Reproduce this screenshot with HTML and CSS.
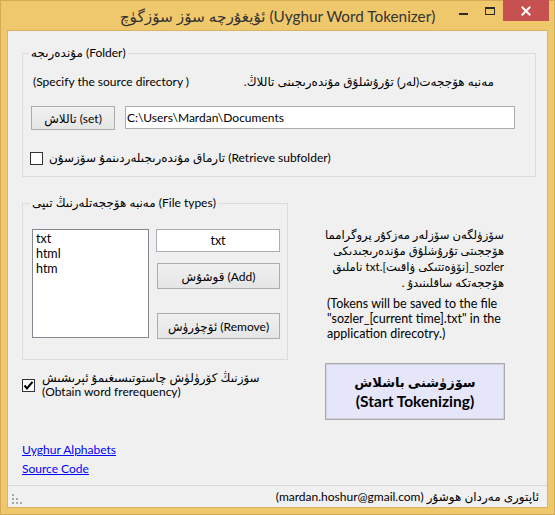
FILE: index.html
```html
<!DOCTYPE html>
<html lang="ug">
<head>
<meta charset="utf-8">
<title>Uyghur Word Tokenizer</title>
<link rel="stylesheet" href="styles.css">
</head>
<body>
<div class="window">
  <div class="titlebar">
    <div class="tb-spacer"></div>
    <div class="title">ئۇيغۇرچە سۆز سۆزگۈچ (Uyghur Word Tokenizer)</div>
    <div class="controls">
      <span class="ctl ctl-min"><svg width="26" height="21" viewBox="0 0 26 21"><rect x="8" y="13" width="9" height="2" fill="#2b2b2b"/></svg></span>
      <span class="ctl ctl-max"><svg width="26" height="21" viewBox="0 0 26 21"><rect x="8.5" y="7.5" width="9" height="7" fill="none" stroke="#2b2b2b"/><rect x="8" y="7" width="10" height="2" fill="#2b2b2b"/></svg></span>
      <span class="ctl ctl-close"><svg width="46" height="21" viewBox="0 0 46 21"><path d="M19.5 7.5 L26.5 14.5 M26.5 7.5 L19.5 14.5" stroke="#fff" stroke-width="2" stroke-linecap="square"/></svg></span>
    </div>
  </div>

  <div class="client">
    <div class="content">
      <div class="group group-folder">
        <div class="legend">مۇندەرىجە (Folder)</div>
        <div class="spec-row">
          <span>(Specify the source directory )</span>
          <span dir="rtl">مەنبە ھۆججەت(لەر) تۇرۇشلۇق مۇندەرىجىنى تاللاڭ.</span>
        </div>
        <div class="path-row">
          <div class="btn btn-set">تاللاش (set)</div>
          <div class="textbox textbox-path">C:\Users\Mardan\Documents</div>
        </div>
        <div class="check-row">
          <span class="checkbox"></span>
          <span class="check-label">تارماق مۇندەرىجىلەردىنمۇ سۆزسۇن (Retrieve subfolder)</span>
        </div>
      </div>

      <div class="lower">
        <div class="group group-types">
          <div class="legend legend-types">مەنبە ھۆججەتلەرنىڭ تىپى (File types)</div>
          <div class="types-body">
            <div class="listbox">
              <div>txt</div>
              <div>html</div>
              <div>htm</div>
            </div>
            <div class="types-side">
              <div class="textbox textbox-ext">txt</div>
              <div class="btn btn-add">قوشۇش (Add)</div>
              <div class="btn btn-remove">ئۆچۈرۈش (Remove)</div>
            </div>
          </div>
        </div>

        <div class="desc">
          <div class="desc-ug" dir="rtl">سۆزۈلگەن سۆزلەر مەزكۇر پروگرامما<br>ھۆججىتى تۇرۇشلۇق مۇندەرىجىدىكى<br>sozler_[نۆۋەتتىكى ۋاقىت].txt ناملىق<br>ھۆججەتكە ساقلىنىدۇ .</div>
          <div class="desc-en">(Tokens will be saved to the file<br>"sozler_[current time].txt" in the<br>application direcotry.)</div>
        </div>

        <div class="freq-row">
          <span class="checkbox checked"><svg width="11" height="11" viewBox="0 0 11 11"><path d="M1.5 5.5 L4 8.5 L9.5 1.8" fill="none" stroke="#000" stroke-width="2"/></svg></span>
          <span class="freq-label">سۆزنىڭ كۆرۈلۈش چاستوتىسىغىمۇ ئېرىشىش<br>(Obtain word frerequency)</span>
        </div>

        <div class="btn-start">
          <div class="start-text"><div class="start-ug">سۆزۈشنى باشلاش</div><div>(Start Tokenizing)</div></div>
        </div>
      </div>

      <div class="links">
        <a class="link" href="#">Uyghur Alphabets</a>
        <a class="link" href="#">Source Code</a>
      </div>
    </div>

    <div class="statusbar">
      <svg class="grip" width="10" height="10" viewBox="0 0 10 10" fill="#a8a8a8"><rect x="0" y="0" width="2" height="2"/><rect x="0" y="4" width="2" height="2"/><rect x="4" y="4" width="2" height="2"/><rect x="0" y="8" width="2" height="2"/><rect x="4" y="8" width="2" height="2"/><rect x="8" y="8" width="2" height="2"/></svg>
      <span class="status-text" dir="rtl">ئاپتورى مەردان ھوشۇر (mardan.hoshur@gmail.com)</span>
    </div>
  </div>
</div>
</body>
</html>
```

FILE: styles.css
```css
* { box-sizing: border-box; }
html, body { margin: 0; padding: 0; }
body {
  width: 555px;
  height: 515px;
  overflow: hidden;
  font-family: Lato, "DejaVu Sans", sans-serif;
  font-size: 12px;
  color: #000;
  background: #fff;
}

.window {
  width: 555px;
  height: 515px;
  background: #f0c86c;
  border: 1px solid #d2aa55;
  display: flex;
  flex-direction: column;
}

/* title bar */
.titlebar {
  height: 29px;
  display: grid;
  grid-template-columns: 1fr auto 1fr;
}
.title {
  align-self: center;
  font-size: 15.3px;
  line-height: 20px;
  color: #333;
  white-space: nowrap;
}
.controls {
  justify-self: end;
  display: flex;
  height: 21px;
  margin-top: -1px;
  margin-right: 5px;
}
.ctl { display: block; height: 21px; }
.ctl svg { display: block; }
.ctl-close { background: #c75050; }

/* client area */
.client {
  flex: 1;
  margin: 0 6px 6px;
  border: 1px solid #d9b264;
  background: #f0f0f0;
  display: flex;
  flex-direction: column;
}
.content {
  flex: 1;
  padding-left: 14px;
}

/* group boxes */
.group {
  border: 1px solid #dcdcdc;
  display: flex;
  flex-direction: column;
}
.legend {
  align-self: flex-start;
  height: 16px;
  line-height: 16px;
  margin-top: -9px;
  margin-left: 6px;
  padding: 0 2px;
  background: #f0f0f0;
  white-space: nowrap;
}
.legend-types { margin-left: 7px; }

.group-folder {
  margin-top: 22px;
  width: 514px;
  height: 124px;
}
.spec-row {
  margin-top: 13px;
  height: 16px;
  line-height: 16px;
  display: flex;
  justify-content: space-between;
  padding-left: 10px;
  padding-right: 41px;
  white-space: nowrap;
}
.path-row {
  margin-top: 16px;
  display: flex;
  align-items: flex-start;
  padding-left: 8px;
}
.check-row {
  margin-top: 20px;
  height: 16px;
  display: flex;
  align-items: center;
  padding-left: 7px;
  white-space: nowrap;
}
.check-label { margin-left: 6px; line-height: 16px; }

/* controls */
.btn {
  display: flex;
  align-items: center;
  justify-content: center;
  border: 1px solid #acacac;
  background: linear-gradient(#f0f0f0, #e5e5e5);
  white-space: nowrap;
}
.btn-set { width: 84px; height: 24px; }
.textbox {
  border: 1px solid #abadb3;
  background: #fff;
  white-space: nowrap;
}
.textbox-path {
  margin-left: 10px;
  width: 390px;
  height: 23px;
  line-height: 21px;
  padding-left: 1px;
}
.checkbox {
  display: block;
  flex: none;
  width: 13px;
  height: 13px;
  border: 1px solid #333;
  background: #fff;
}
.checkbox svg { display: block; }

/* lower section */
.lower {
  margin-top: 26px;
  display: grid;
  grid-template-columns: 266px 180px;
  column-gap: 37px;
}
.group-types { height: 157px; }
.types-body {
  margin-top: 18px;
  display: flex;
  padding-left: 9px;
}
.listbox {
  width: 117px;
  height: 109px;
  border: 1px solid #828790;
  background: #fff;
  padding: 1px 3px 0;
  line-height: 15px;
  font-size: 12.5px;
}
.types-side {
  margin-left: 7px;
  display: flex;
  flex-direction: column;
}
.textbox-ext {
  width: 124px;
  height: 23px;
  line-height: 21px;
  text-align: center;
  font-size: 12.5px;
}
.btn-add, .btn-remove {
  width: 123px;
  height: 26px;
  margin-left: 1px;
}
.btn-add { margin-top: 11px; }
.btn-remove { margin-top: 24px; }

.desc {
  margin-top: 24px;
  padding: 0 1px 0 2px;
  white-space: nowrap;
}
.desc-ug { line-height: 16px; font-size: 11.6px; }
.desc-en { margin-top: 5px; line-height: 15px; font-size: 12.5px; }

.freq-row {
  margin-top: 11px;
  display: flex;
  align-items: center;
  align-self: start;
}
.freq-label {
  margin-left: 7px;
  line-height: 14px;
  white-space: nowrap;
}
.btn-start {
  margin-top: 3px;
  width: 180px;
  height: 57px;
  display: flex;
  align-items: center;
  justify-content: center;
  background: #e6e6fa;
  border: 1px solid #a8a8a8;
  box-shadow: inset 0 0 0 1px #d2d2e2;
}
.start-text {
  text-align: center;
  font-weight: bold;
  font-size: 15.5px;
  line-height: 19px;
  white-space: nowrap;
}
.start-ug { font-size: 13px; }

/* links */
.links { margin-top: 20px; }
.link {
  display: table;
  line-height: 19px;
  color: #0000ff;
  text-decoration: underline;
}

/* status bar */
.statusbar {
  height: 22px;
  border-top: 1px solid #d7d7d7;
  display: flex;
  align-items: flex-start;
}
.grip {
  display: block;
  margin-top: 8px;
  margin-left: 4px;
}
.status-text {
  margin-left: auto;
  margin-right: 8px;
  margin-top: 3px;
  line-height: 16px;
  white-space: nowrap;
}
```
